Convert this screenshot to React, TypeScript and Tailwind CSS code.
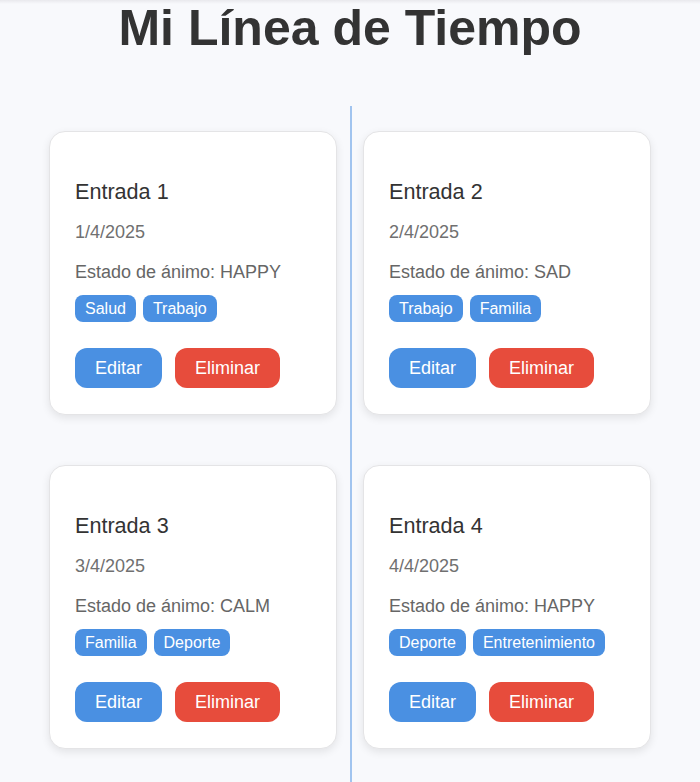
const entries = [
  { title: "Entrada 1", date: "1/4/2025", mood: "HAPPY", tags: ["Salud", "Trabajo"] },
  { title: "Entrada 2", date: "2/4/2025", mood: "SAD", tags: ["Trabajo", "Familia"] },
  { title: "Entrada 3", date: "3/4/2025", mood: "CALM", tags: ["Familia", "Deporte"] },
  { title: "Entrada 4", date: "4/4/2025", mood: "HAPPY", tags: ["Deporte", "Entretenimiento"] },
];

export default function App() {
  return (
    <div className="min-h-[782px] bg-[#f8f9fc] font-['Liberation_Sans',Arial,sans-serif] text-[#333]">
      <div className="h-[4px] bg-gradient-to-b from-[#e9e9ed] to-[#f8f9fc]" />
      <h1 className="-mt-[4px] text-center text-[50px] font-bold leading-[56px] text-[#333]">
        Mi Línea de Tiempo
      </h1>

      <div className="relative mt-[50px] px-[49px] pb-[40px] pt-[25px]">
        <div className="absolute bottom-0 left-[350px] top-0 w-[2px] bg-[#4a90e2]/50" />

        <div className="relative grid grid-cols-2 gap-x-[26px] gap-y-[50px]">
          {entries.map((entry) => (
            <div
              key={entry.title}
              className="rounded-2xl border border-[#e4e4e6] bg-white px-[25px] pb-[26px] pt-[26px] shadow-[0_3px_8px_rgba(0,0,0,0.09)]"
            >
              <h3 className="mt-[21px] text-[21.6px] leading-[25px] text-[#333]">
                {entry.title}
              </h3>
              <p className="mt-[18px] text-[18px] leading-[21px] text-[#707070]">
                {entry.date}
              </p>
              <p className="mt-[19px] text-[18px] leading-[21px] text-[#666]">
                Estado de ánimo: {entry.mood}
              </p>

              <div className="mt-[12px] flex gap-[7px]">
                {entry.tags.map((tag) => (
                  <span
                    key={tag}
                    className="rounded-[8px] bg-[#4a90e2] px-[10px] py-[4px] text-[16px] leading-[19px] text-white"
                  >
                    {tag}
                  </span>
                ))}
              </div>

              <div className="mt-[26px] flex gap-[13px]">
                <button
                  type="button"
                  className="rounded-[12px] bg-[#4a90e2] px-[20px] py-[9.5px] text-[18px] leading-[21px] text-white"
                >
                  Editar
                </button>
                <button
                  type="button"
                  className="rounded-[12px] bg-[#e74c3c] px-[20px] py-[9.5px] text-[18px] leading-[21px] text-white"
                >
                  Eliminar
                </button>
              </div>
            </div>
          ))}
        </div>
      </div>
    </div>
  );
}
